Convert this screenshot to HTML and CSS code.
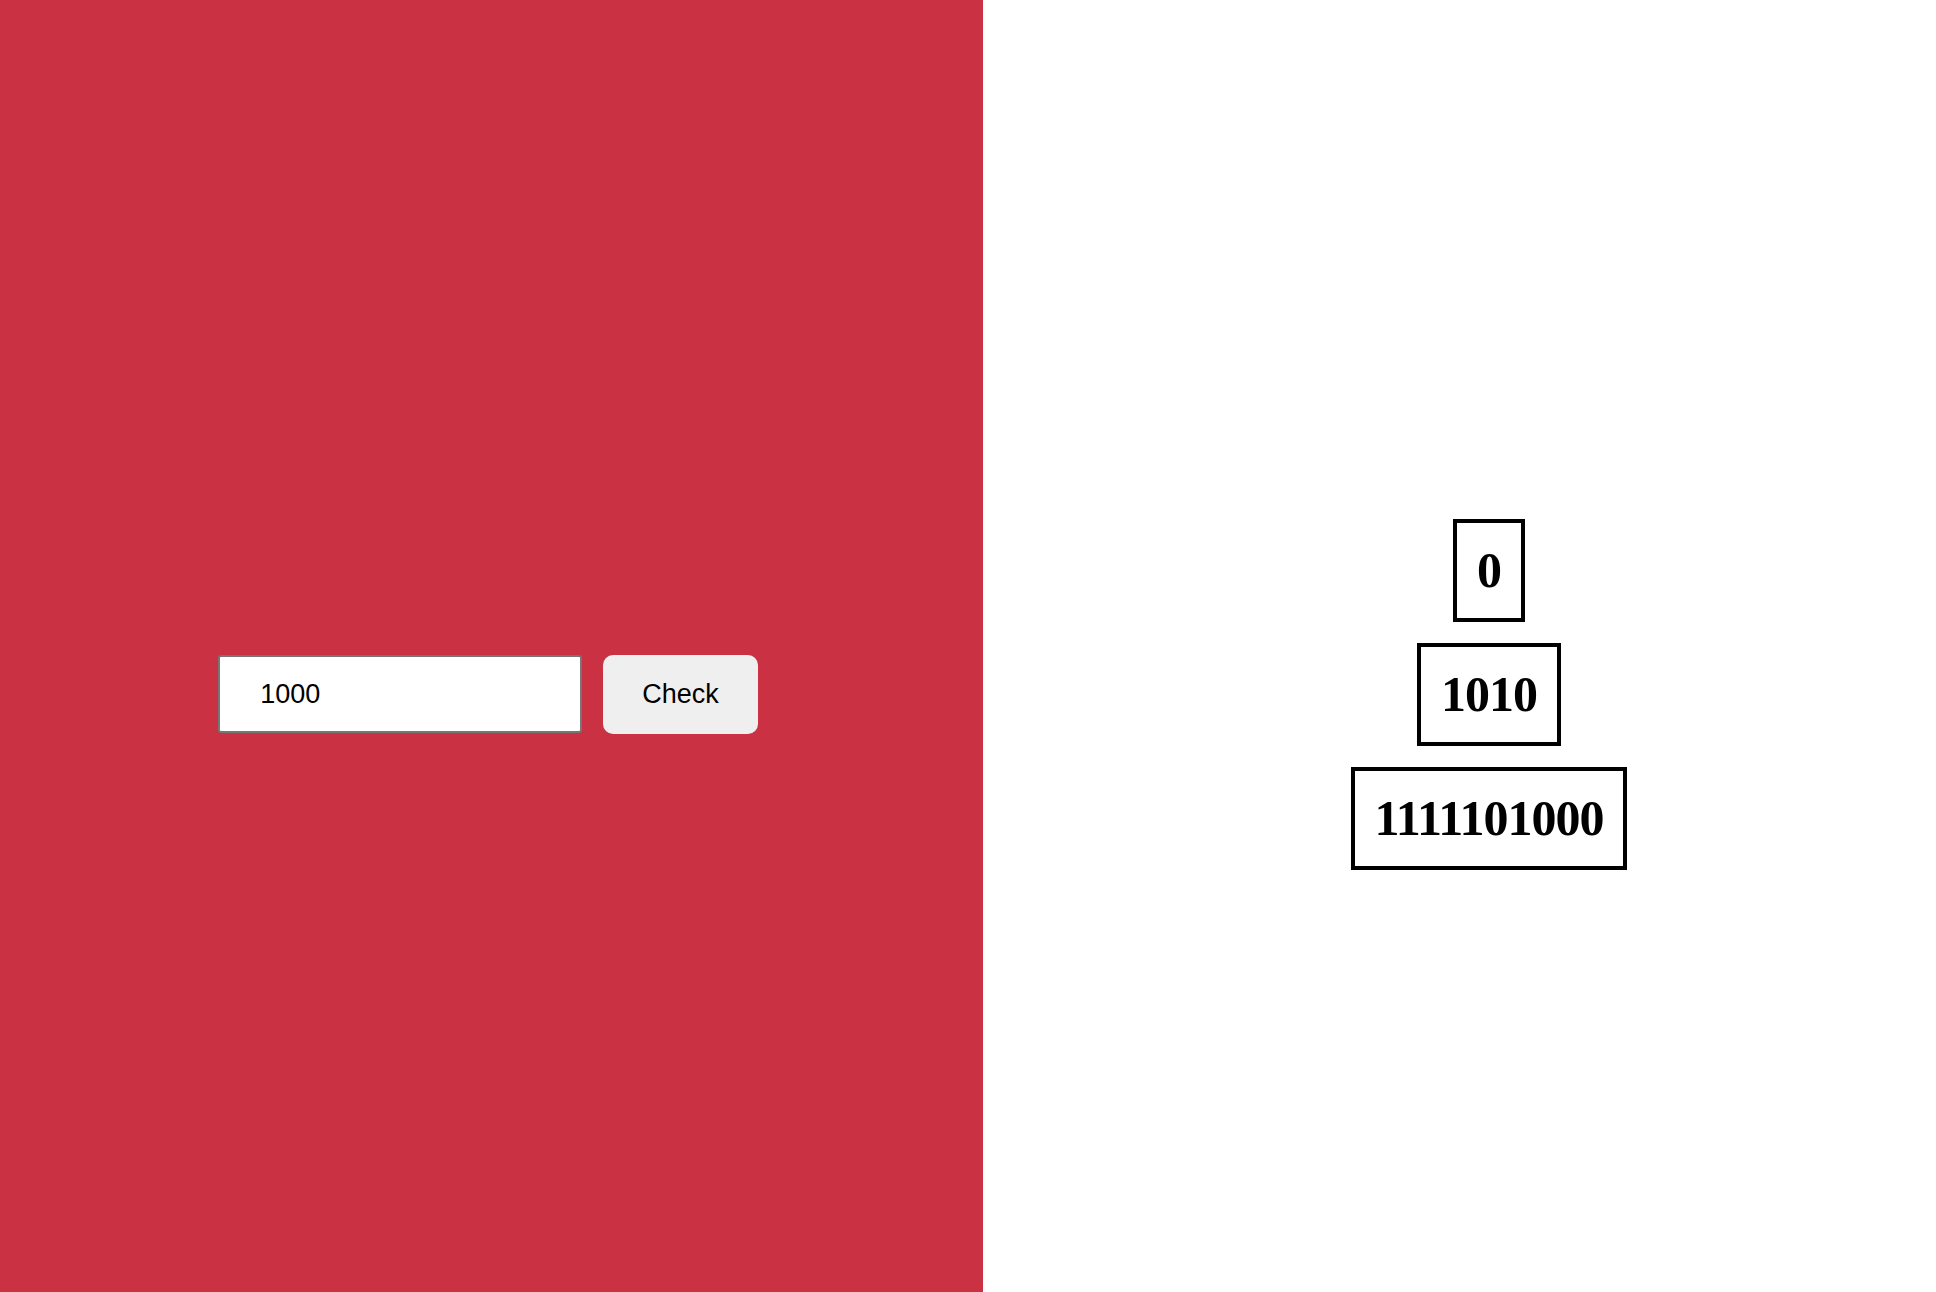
FILE: index.html
```html
<!DOCTYPE html>
<html lang="en">
<head>
<meta charset="utf-8">
<title>Binary check</title>
<link rel="stylesheet" href="styles.css">
</head>
<body>
<main class="page">
  <section class="left">
    <form class="checker">
      <input class="num-input" type="text" value="1000">
      <button class="check-btn" type="button">Check</button>
    </form>
  </section>
  <section class="right">
    <div class="stack">
      <div class="cell">0</div>
      <div class="cell">1010</div>
      <div class="cell">1111101000</div>
    </div>
  </section>
</main>
</body>
</html>
```

FILE: styles.css
```css
html, body {
  margin: 0;
  padding: 0;
  height: 100%;
}

body {
  font-family: "Liberation Sans", Arial, sans-serif;
  background: #ffffff;
  overflow: hidden;
}

.page {
  display: flex;
  width: 1936px;
  height: 1292px;
}

.left {
  width: 983px;
  flex: none;
  background: #ca3143;
  display: flex;
  align-items: center;
  justify-content: center;
  box-sizing: border-box;
  padding: 96px 7px 0 0;
}

.checker {
  display: flex;
  align-items: center;
  gap: 21px;
  margin: 0;
}

.num-input {
  box-sizing: border-box;
  width: 364px;
  height: 78px;
  padding: 0 40px;
  border: 2px solid #767676;
  border-radius: 3px;
  background: #ffffff;
  color: #000000;
  font-family: "Liberation Sans", Arial, sans-serif;
  font-size: 27px;
  outline: none;
}

.check-btn {
  box-sizing: border-box;
  height: 79px;
  padding: 0 39px;
  border: none;
  border-radius: 10px;
  background: #efefef;
  color: #000000;
  font-family: "Liberation Sans", Arial, sans-serif;
  font-size: 27px;
  cursor: pointer;
}

.right {
  flex: 1;
  display: flex;
  align-items: center;
  justify-content: center;
  box-sizing: border-box;
  padding: 96px 0 0 59px;
}

.stack {
  display: flex;
  flex-direction: column;
  align-items: center;
  gap: 21px;
}

.cell {
  border: 4px solid #000000;
  padding: 21px 20px;
  font-family: "Liberation Serif", "Times New Roman", serif;
  font-weight: bold;
  font-size: 50px;
  letter-spacing: -1px;
  line-height: 53px;
  color: #000000;
}
```
